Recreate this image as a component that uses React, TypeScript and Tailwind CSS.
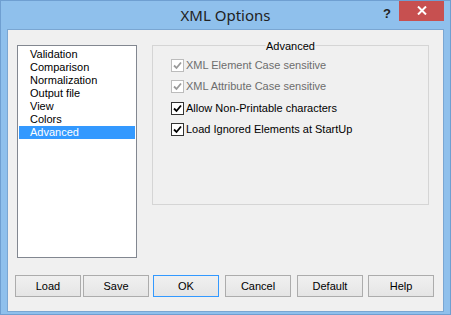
import React from "react";

const items = ["Validation", "Comparison", "Normalization", "Output file", "View", "Colors", "Advanced"];

function Check({ on, disabled }: { on: boolean; disabled?: boolean }) {
  return (
    <span
      className={`w-[13px] h-[13px] shrink-0 border bg-white flex items-center justify-center ${
        disabled ? "border-[#bcbcbc] bg-[#e6e6e6]" : "border-[#333333]"
      }`}
    >
      {on && (
        <svg width="9" height="9" viewBox="0 0 9 9">
          <path
            d="M1 4.5 L3.5 7 L8 1.5"
            fill="none"
            stroke={disabled ? "#9a9a9a" : "#000"}
            strokeWidth="1.8"
          />
        </svg>
      )}
    </span>
  );
}

function Btn({ label, primary, className = "" }: { label: string; primary?: boolean; className?: string }) {
  return (
    <button
      className={`w-[66px] h-[22px] border text-[11px] text-black bg-gradient-to-b from-[#f0f0f0] to-[#e5e5e5] ${
        primary ? "border-[#3399ff]" : "border-[#acacac]"
      } ${className}`}
    >
      {label}
    </button>
  );
}

export default function App() {
  const rows = [
    { label: "XML Element Case sensitive", on: true, disabled: true, h: "h-[21px]" },
    { label: "XML Attribute Case sensitive", on: true, disabled: true, h: "h-[22px]" },
    { label: "Allow Non-Printable characters", on: true, disabled: false, h: "h-[21px]" },
    { label: "Load Ignored Elements at StartUp", on: true, disabled: false, h: "h-[21px]" },
  ];

  return (
    <div
      className="w-[451px] h-[315px] bg-[#8fc0ec] border border-[#6f9fd1] flex flex-col overflow-hidden"
      style={{ fontFamily: "'Liberation Sans', Arial, sans-serif" }}
    >
      <div className="relative h-[28px] shrink-0 flex items-center justify-center">
        <span
          className="text-[15px] text-[#222] mt-[1px]"
          style={{ fontFamily: "'Noto Sans', 'Open Sans', sans-serif" }}
        >
          XML Options
        </span>
        <span className="absolute left-[382px] top-[3px] text-[13px] font-bold text-[#222]">?</span>
        <div className="absolute left-[398px] top-[-1px] w-[45px] h-[21px] bg-[#c75050] flex items-center justify-center">
          <svg width="10" height="9" viewBox="0 0 10 9">
            <path d="M1 0.5 L9 8.5 M9 0.5 L1 8.5" stroke="#fff" strokeWidth="2" />
          </svg>
        </div>
      </div>

      <div className="mx-[6px] h-[283px] border border-[#7aa6d2] bg-[#f0f0f0] pl-[9px] pt-[15px]">
        <div className="flex">
          <div className="w-[120px] h-[213px] border border-[#828790] bg-white p-[1px] pt-[2px]">
            {items.map((it) => (
              <div
                key={it}
                className={`h-[13px] leading-[13px] text-[11px] pl-[11px] ${
                  it === "Advanced" ? "bg-[#3399ff] text-white" : "text-black"
                }`}
              >
                {it}
              </div>
            ))}
          </div>

          <div className="relative ml-[15px] w-[277px] h-[160px] border border-[#d5d5d5] pt-[13px] pl-[18px]">
            <span className="absolute left-1/2 -translate-x-1/2 top-[-6px] px-[1px] bg-[#f0f0f0] text-[11px] leading-[13px] text-black">
              Advanced
            </span>
            {rows.map((r) => (
              <div key={r.label} className={`flex items-start gap-[2px] ${r.h}`}>
                <Check on={r.on} disabled={r.disabled} />
                <span
                  className={`text-[11px] leading-[13px] ${r.disabled ? "text-[#6d6d6d]" : "text-black"}`}
                >
                  {r.label}
                </span>
              </div>
            ))}
          </div>
        </div>

        <div className="flex mt-[17px] ml-[-2px]">
          <Btn label="Load" />
          <Btn label="Save" className="ml-[2px]" />
          <Btn label="OK" primary className="ml-[4px]" />
          <Btn label="Cancel" className="ml-[6px]" />
          <Btn label="Default" className="ml-[6px]" />
          <Btn label="Help" className="ml-[5px]" />
        </div>
      </div>
    </div>
  );
}
